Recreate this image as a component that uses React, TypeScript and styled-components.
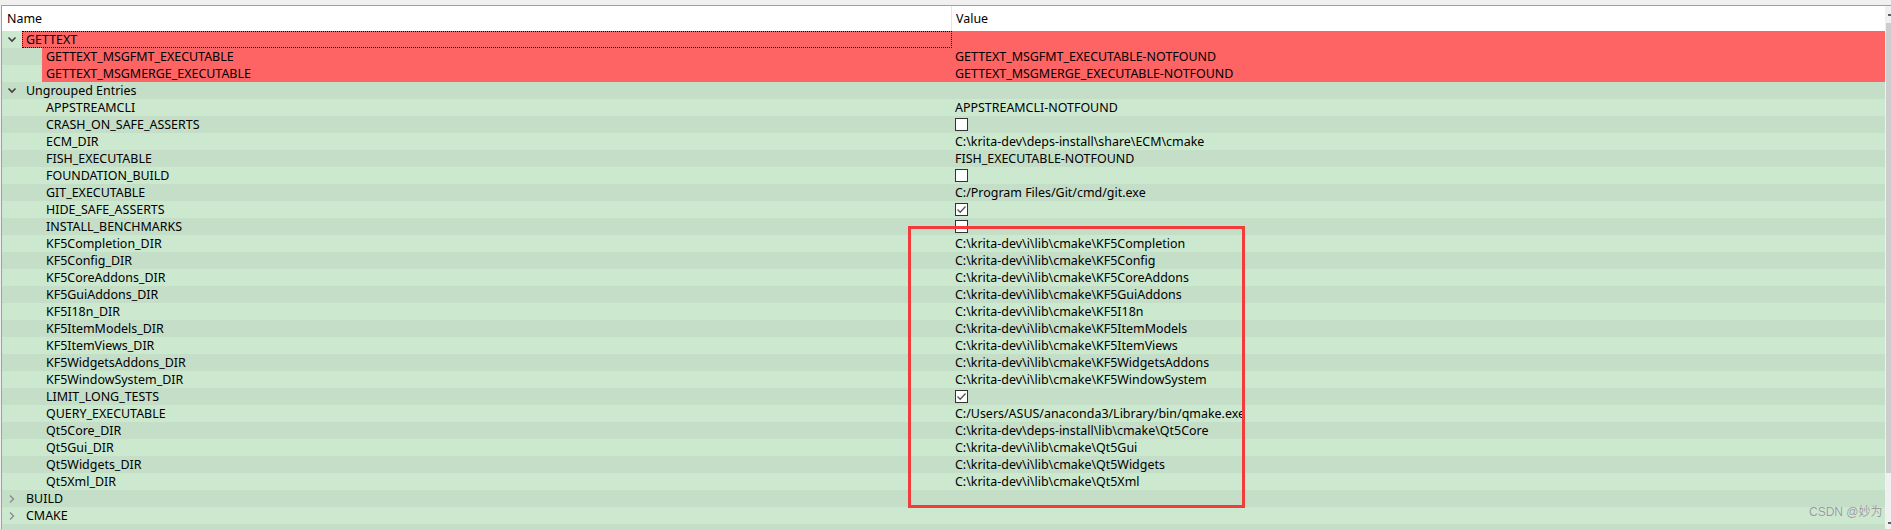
import React from "react";
import styled, { createGlobalStyle, css } from "styled-components";

const GlobalStyle = createGlobalStyle`
  html, body {
    margin: 0;
    padding: 0;
    background: #f0f0f0;
    overflow: hidden;
  }
  body {
    font-family: "Noto Sans", "Noto Sans CJK SC", sans-serif;
    font-size: 12.45px;
    color: #000;
  }
`;

const Window = styled.div`
  position: relative;
  width: 1891px;
  height: 529px;
  overflow: hidden;
  padding-top: 5px;
  box-sizing: border-box;
`;

const Frame = styled.div`
  margin-left: 1px;
  height: 524px;
  border-top: 1px solid #a0a0a0;
  border-left: 1px solid #a0a0a0;
  box-sizing: border-box;
  display: grid;
  grid-template-columns: 1883px 1fr;
  overflow: hidden;
`;

const Tree = styled.div`
  display: flex;
  flex-direction: column;
  overflow: hidden;
`;

const Header = styled.div`
  display: grid;
  grid-template-columns: 949px 1fr;
  height: 25px;
  background: #fff;
  flex: none;
`;

const HeaderCell = styled.div<{ $sep?: boolean }>`
  line-height: 25px;
  padding-left: ${(p) => (p.$sep ? "4px" : "5px")};
  white-space: nowrap;
  ${(p) =>
    p.$sep &&
    css`
      border-left: 1px solid #e5e5e5;
    `}
`;

const Row = styled.div<{ $alt: boolean }>`
  display: flex;
  height: 17px;
  flex: none;
  background: ${(p) => (p.$alt ? "#c4dec8" : "#cce8cf")};
`;

const Branch = styled.div<{ $w: number }>`
  width: ${(p) => p.$w}px;
  flex: none;
  display: flex;
  align-items: center;
  padding-left: 5px;
  box-sizing: border-box;
`;

const Content = styled.div<{ $red: boolean }>`
  flex: 1;
  display: flex;
  min-width: 0;
  background: ${(p) => (p.$red ? "#ff6464" : "transparent")};
`;

const NameCell = styled.div<{ $w: number; $focus?: boolean }>`
  width: ${(p) => p.$w}px;
  flex: none;
  line-height: 17px;
  padding-left: 4px;
  box-sizing: border-box;
  white-space: nowrap;
  color: #000;
  ${(p) =>
    p.$focus &&
    css`
      border: 1px dotted #000;
      line-height: 15px;
      padding-left: 3px;
      width: ${p.$w + 1}px;
      margin-right: -1px;
    `}
`;

const ValueCell = styled.div`
  flex: 1;
  line-height: 17px;
  padding-left: 4px;
  white-space: nowrap;
  color: #000;
  display: flex;
  align-items: center;
`;

const CheckBox = styled.span`
  width: 13px;
  height: 13px;
  box-sizing: border-box;
  border: 1px solid #333;
  background: #fff;
  display: inline-flex;
  align-items: center;
  justify-content: center;
`;

const Scrollbar = styled.div`
  background: #f0f0f0;
  display: flex;
  flex-direction: column;
  position: relative;
`;

const ScrollArrow = styled.div<{ $down?: boolean }>`
  height: 17px;
  flex: none;
  position: relative;
  &::after {
    content: "";
    position: absolute;
    left: 3px;
    top: ${(p) => (p.$down ? "10px" : "8px")};
    width: 3px;
    height: 2px;
    background: #606060;
  }
`;

const Thumb = styled.div`
  height: 450px;
  flex: none;
  margin-left: 1px;
  background: #cdcdcd;
`;

const Track = styled.div`
  flex: 1;
`;

const Highlight = styled.div`
  position: absolute;
  left: 908px;
  top: 226px;
  width: 337px;
  height: 282px;
  border: 3px solid #f23c3c;
  box-sizing: border-box;
  pointer-events: none;
`;

const Watermark = styled.div`
  position: absolute;
  left: 1809px;
  top: 504px;
  font-family: "Liberation Sans", "Noto Sans CJK SC", sans-serif;
  font-size: 12px;
  line-height: 16px;
  color: #9a9a9a;
  white-space: nowrap;
  text-shadow: 0 0 1px rgba(255, 255, 255, 0.6);
`;

const DownChevron = () => (
  <svg width="10" height="7" viewBox="0 0 10 7">
    <polyline
      points="1.5,1.5 5,5 8.5,1.5"
      fill="none"
      stroke="#404040"
      strokeWidth="1.6"
    />
  </svg>
);

const RightChevron = () => (
  <svg width="8" height="10" viewBox="0 0 8 10" style={{ marginLeft: 1 }}>
    <polyline
      points="2,1.5 5.5,5 2,8.5"
      fill="none"
      stroke="#8a8a8a"
      strokeWidth="1.3"
    />
  </svg>
);

const Check = () => (
  <svg width="11" height="11" viewBox="0 0 11 11">
    <polyline
      points="1.5,5.5 4.2,8.2 9.5,2.5"
      fill="none"
      stroke="#555"
      strokeWidth="1.3"
    />
  </svg>
);

type Entry =
  | { kind: "group"; name: string; open: boolean; red?: boolean; focus?: boolean }
  | { kind: "text"; name: string; value: string; red?: boolean }
  | { kind: "check"; name: string; checked: boolean }
  | { kind: "empty" };

const rows: Entry[] = [
  { kind: "group", name: "GETTEXT", open: true, red: true, focus: true },
  { kind: "text", name: "GETTEXT_MSGFMT_EXECUTABLE", value: "GETTEXT_MSGFMT_EXECUTABLE-NOTFOUND", red: true },
  { kind: "text", name: "GETTEXT_MSGMERGE_EXECUTABLE", value: "GETTEXT_MSGMERGE_EXECUTABLE-NOTFOUND", red: true },
  { kind: "group", name: "Ungrouped Entries", open: true },
  { kind: "text", name: "APPSTREAMCLI", value: "APPSTREAMCLI-NOTFOUND" },
  { kind: "check", name: "CRASH_ON_SAFE_ASSERTS", checked: false },
  { kind: "text", name: "ECM_DIR", value: "C:\\krita-dev\\deps-install\\share\\ECM\\cmake" },
  { kind: "text", name: "FISH_EXECUTABLE", value: "FISH_EXECUTABLE-NOTFOUND" },
  { kind: "check", name: "FOUNDATION_BUILD", checked: false },
  { kind: "text", name: "GIT_EXECUTABLE", value: "C:/Program Files/Git/cmd/git.exe" },
  { kind: "check", name: "HIDE_SAFE_ASSERTS", checked: true },
  { kind: "check", name: "INSTALL_BENCHMARKS", checked: false },
  { kind: "text", name: "KF5Completion_DIR", value: "C:\\krita-dev\\i\\lib\\cmake\\KF5Completion" },
  { kind: "text", name: "KF5Config_DIR", value: "C:\\krita-dev\\i\\lib\\cmake\\KF5Config" },
  { kind: "text", name: "KF5CoreAddons_DIR", value: "C:\\krita-dev\\i\\lib\\cmake\\KF5CoreAddons" },
  { kind: "text", name: "KF5GuiAddons_DIR", value: "C:\\krita-dev\\i\\lib\\cmake\\KF5GuiAddons" },
  { kind: "text", name: "KF5I18n_DIR", value: "C:\\krita-dev\\i\\lib\\cmake\\KF5I18n" },
  { kind: "text", name: "KF5ItemModels_DIR", value: "C:\\krita-dev\\i\\lib\\cmake\\KF5ItemModels" },
  { kind: "text", name: "KF5ItemViews_DIR", value: "C:\\krita-dev\\i\\lib\\cmake\\KF5ItemViews" },
  { kind: "text", name: "KF5WidgetsAddons_DIR", value: "C:\\krita-dev\\i\\lib\\cmake\\KF5WidgetsAddons" },
  { kind: "text", name: "KF5WindowSystem_DIR", value: "C:\\krita-dev\\i\\lib\\cmake\\KF5WindowSystem" },
  { kind: "check", name: "LIMIT_LONG_TESTS", checked: true },
  { kind: "text", name: "QUERY_EXECUTABLE", value: "C:/Users/ASUS/anaconda3/Library/bin/qmake.exe" },
  { kind: "text", name: "Qt5Core_DIR", value: "C:\\krita-dev\\deps-install\\lib\\cmake\\Qt5Core" },
  { kind: "text", name: "Qt5Gui_DIR", value: "C:\\krita-dev\\i\\lib\\cmake\\Qt5Gui" },
  { kind: "text", name: "Qt5Widgets_DIR", value: "C:\\krita-dev\\i\\lib\\cmake\\Qt5Widgets" },
  { kind: "text", name: "Qt5Xml_DIR", value: "C:\\krita-dev\\i\\lib\\cmake\\Qt5Xml" },
  { kind: "group", name: "BUILD", open: false },
  { kind: "group", name: "CMAKE", open: false },
  { kind: "empty" },
];

const NAME_COL = 949;

function TreeRow({ entry, index }: { entry: Entry; index: number }) {
  const alt = index % 2 === 1;
  if (entry.kind === "empty") {
    return <Row $alt={alt} />;
  }
  if (entry.kind === "group") {
    const indent = 20;
    return (
      <Row $alt={alt}>
        <Branch $w={indent}>{entry.open ? <DownChevron /> : <RightChevron />}</Branch>
        <Content $red={!!entry.red}>
          <NameCell $w={NAME_COL - indent} $focus={entry.focus}>
            {entry.name}
          </NameCell>
          <ValueCell />
        </Content>
      </Row>
    );
  }
  const indent = 40;
  const red = entry.kind === "text" && !!entry.red;
  return (
    <Row $alt={alt}>
      <Branch $w={indent} />
      <Content $red={red}>
        <NameCell $w={NAME_COL - indent}>{entry.name}</NameCell>
        <ValueCell>
          {entry.kind === "text" ? (
            entry.value
          ) : (
            <CheckBox>{entry.checked && <Check />}</CheckBox>
          )}
        </ValueCell>
      </Content>
    </Row>
  );
}

export default function App() {
  return (
    <>
      <GlobalStyle />
      <Window>
        <Frame>
          <Tree>
            <Header>
              <HeaderCell>Name</HeaderCell>
              <HeaderCell $sep>Value</HeaderCell>
            </Header>
            {rows.map((r, i) => (
              <TreeRow key={i} entry={r} index={i} />
            ))}
          </Tree>
          <Scrollbar>
            <ScrollArrow />
            <Thumb />
            <Track />
            <ScrollArrow $down />
          </Scrollbar>
        </Frame>
        <Highlight />
        <Watermark>CSDN @妙为</Watermark>
      </Window>
    </>
  );
}
